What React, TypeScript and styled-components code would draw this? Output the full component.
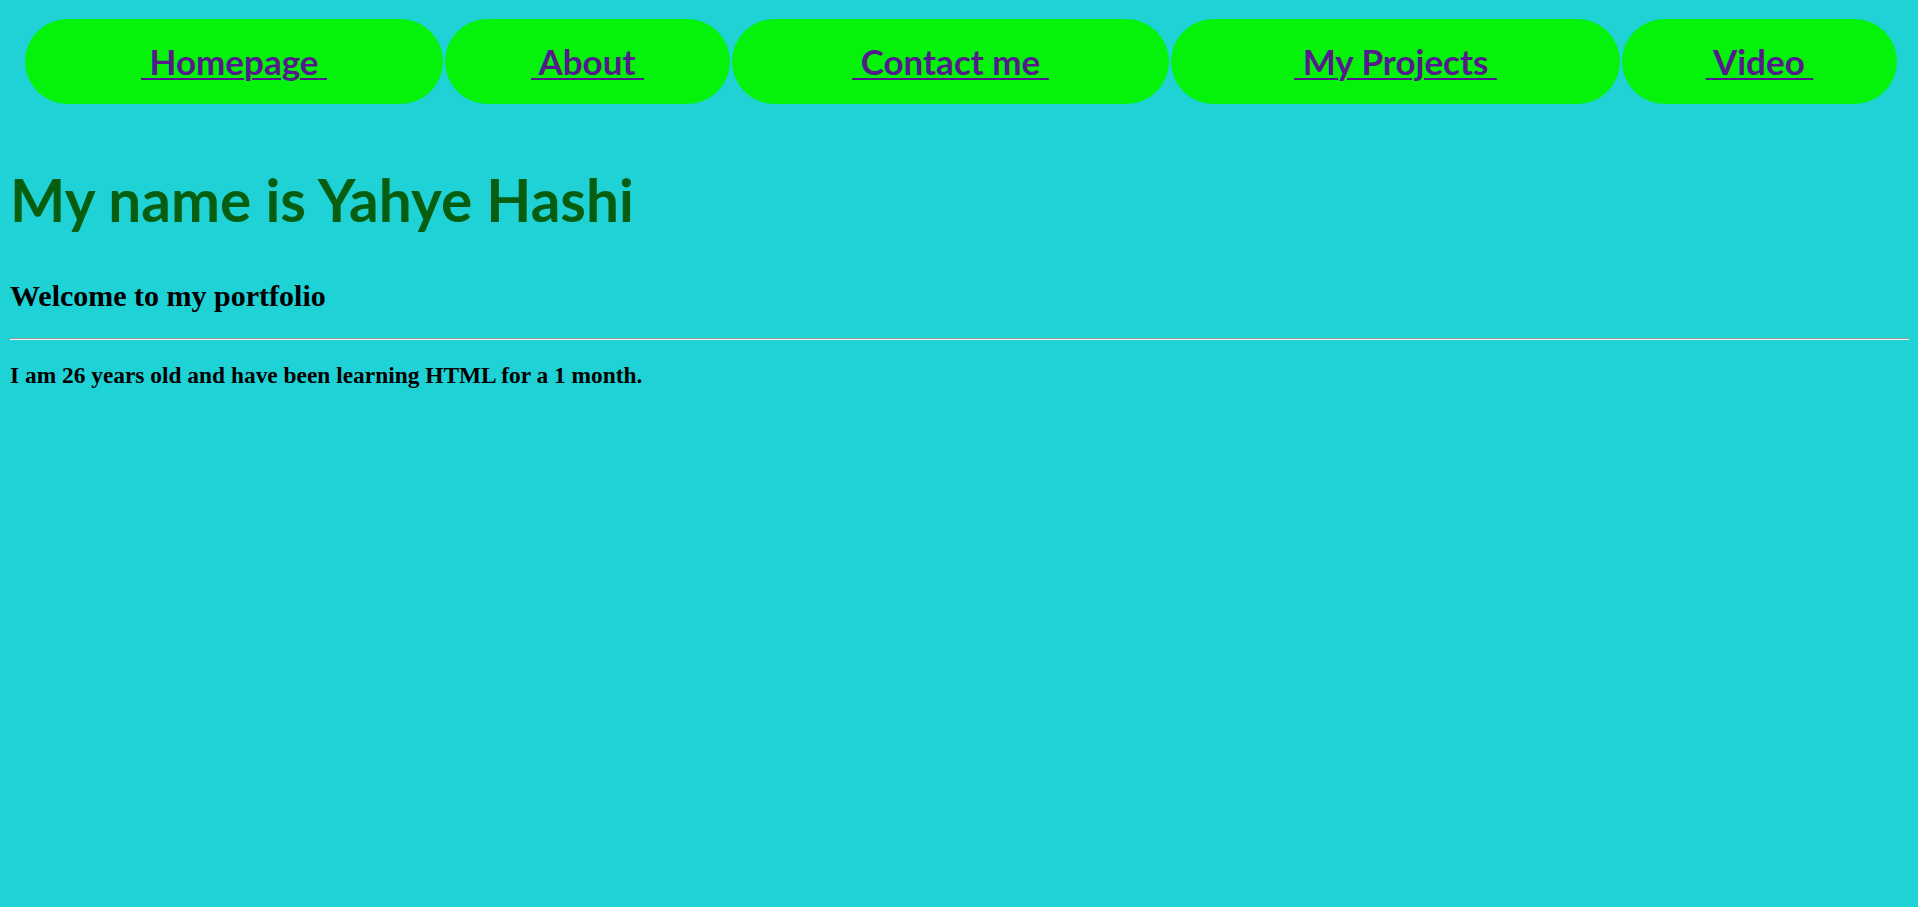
import React from "react";
import styled, { createGlobalStyle } from "styled-components";

const GlobalStyle = createGlobalStyle`
  html, body {
    margin: 0;
    padding: 0;
    background: #1fd2d6;
  }
  body {
    min-height: 907px;
  }
`;

const Page = styled.div`
  display: flex;
  flex-direction: column;
  padding: 0 9px 0 10px;
`;

const Nav = styled.nav`
  display: flex;
  gap: 2px;
  padding: 19px 12px 0 15px;
`;

const NavItem = styled.div<{ $grow: number }>`
  flex: ${(p) => p.$grow} 1 0;
  height: 85px;
  border-radius: 999px;
  background: #05f20b;
  display: flex;
  align-items: center;
  justify-content: center;
`;

const NavLink = styled.a`
  font-family: Lato, "Open Sans", sans-serif;
  font-weight: 700;
  font-size: 35px;
  line-height: 1;
  color: #551a8b;
  text-decoration: underline;
  text-decoration-thickness: 2px;
  text-underline-offset: 3px;
  white-space: pre;
`;

const Title = styled.h1`
  margin: 65.5px 0 0;
  font-family: Lato, "Open Sans", sans-serif;
  font-weight: 700;
  font-size: 58.5px;
  line-height: 1;
  color: #085e10;
`;

const Subtitle = styled.h2`
  margin: 52.5px 0 0;
  font-family: "Liberation Serif", "Times New Roman", serif;
  font-weight: 700;
  font-size: 30px;
  line-height: 1;
  color: #000;
`;

const Rule = styled.hr`
  margin: 27px 0 0;
  height: 0;
  border: none;
  border-top: 1px solid #9a9a9a;
  border-bottom: 1px solid #f2f2f2;
`;

const Intro = styled.h3`
  margin: 24px 0 0;
  font-family: "Liberation Serif", "Times New Roman", serif;
  font-weight: 700;
  font-size: 23.4px;
  line-height: 1;
  color: #000;
`;

const links = [
  { label: "Homepage", grow: 418 },
  { label: "About", grow: 285 },
  { label: "Contact me", grow: 437 },
  { label: "My Projects", grow: 449 },
  { label: "Video", grow: 275 },
];

export default function App() {
  return (
    <>
      <GlobalStyle />
      <Page>
        <Nav>
          {links.map((l) => (
            <NavItem key={l.label} $grow={l.grow}>
              <NavLink href="#">{"\u00a0" + l.label + "\u00a0"}</NavLink>
            </NavItem>
          ))}
        </Nav>
        <Title>My name is Yahye Hashi</Title>
        <Subtitle>Welcome to my portfolio</Subtitle>
        <Rule />
        <Intro>I am 26 years old and have been learning HTML for a 1 month.</Intro>
      </Page>
    </>
  );
}
